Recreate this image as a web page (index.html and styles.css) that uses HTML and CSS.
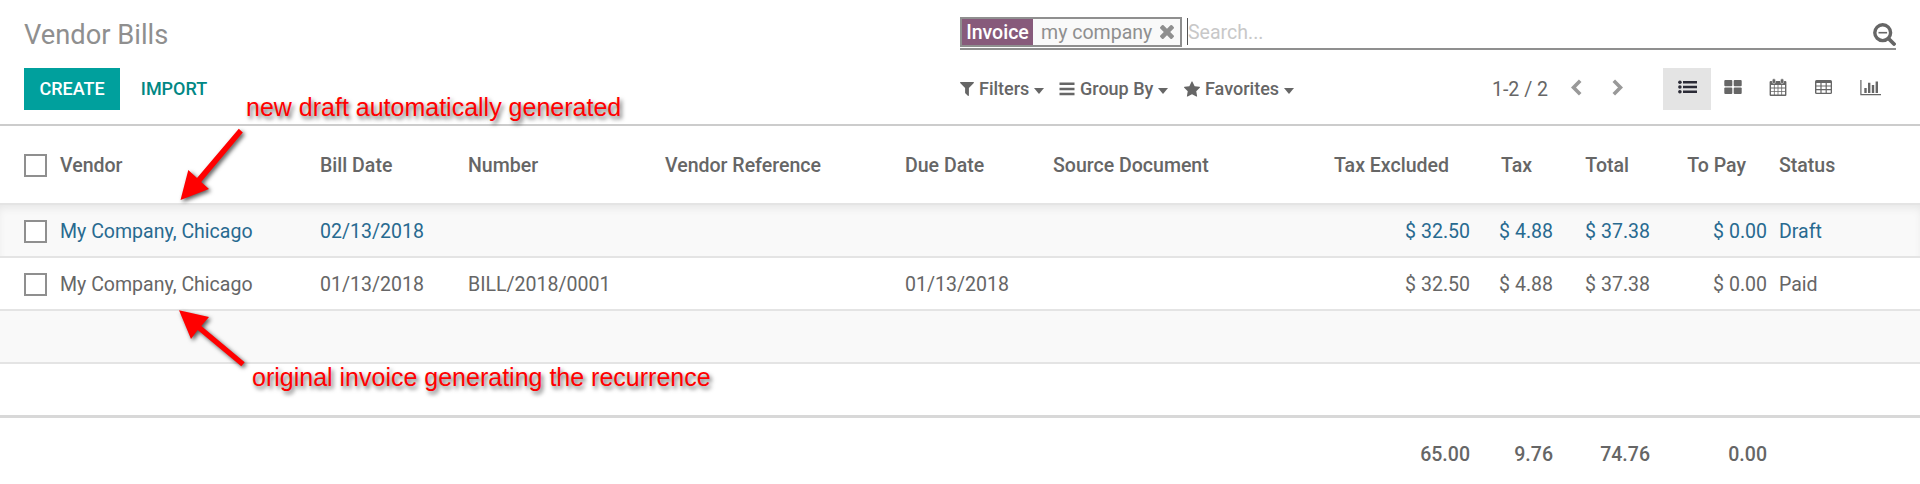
FILE: index.html
```html
<!DOCTYPE html>
<html lang="en">
<head>
<meta charset="utf-8">
<title>Vendor Bills</title>
<link rel="stylesheet" href="styles.css">
</head>
<body>
<header class="control-panel">
  <div class="panel-left">
    <h1 class="title">Vendor Bills</h1>
    <div class="buttons">
      <button class="btn btn-primary">CREATE</button>
      <button class="btn btn-link">IMPORT</button>
    </div>
  </div>
  <div class="panel-right">
    <div class="search">
      <div class="facet">
        <span class="facet-label">Invoice</span>
        <span class="facet-value">my company</span>
        <svg class="facet-remove" viewBox="302 238 1188 1188"><path d="M1490 1194q0 40-28 68l-136 136q-28 28-68 28t-68-28l-294-294-294 294q-28 28-68 28t-68-28l-136-136q-28-28-28-68t28-68l294-294-294-294q-28-28-28-68t28-68l136-136q28-28 68-28t68 28l294 294 294-294q28-28 68-28t68 28l136 136q28 28 28 68t-28 68l-294 294 294 294q28 28 28 68z"/></svg>
      </div>
      <div class="search-input">Search...</div>
      <svg class="search-toggle" viewBox="0 0 23 23"><circle cx="9.7" cy="9.7" r="7.9" fill="none" stroke="#666" stroke-width="3.4"/><path d="M16 16l5 5" stroke="#666" stroke-width="3.8" stroke-linecap="round"/><path d="M5.5 9.7h8.6" stroke="#666" stroke-width="1.6"/></svg>
    </div>
    <div class="tools">
      <div class="menus">
        <div class="menu menu-filter">
          <svg width="14" height="14" viewBox="192 256 1408 1408"><path d="M1595 295q17 41-14 70l-493 493v742q0 42-39 59-13 5-25 5-27 0-45-19l-256-256q-19-19-19-45v-486l-493-493q-31-29-14-70 17-39 59-39h1280q42 0 59 39z"/></svg>
          <span>Filters</span><i class="caret"></i>
        </div>
        <div class="menu menu-group">
          <svg width="16" height="14" viewBox="0 0 16 14"><path d="M.5 .5h15v2.6H.5zM.5 5.7h15v2.6H.5zM.5 10.7h15v2.6H.5z"/></svg>
          <span>Group By</span><i class="caret"></i>
        </div>
        <div class="menu menu-star">
          <svg width="16" height="16" viewBox="64 33 1664 1587"><path d="M1728 647q0 22-26 48l-363 354 86 500q1 7 1 20 0 21-10.5 35.5t-30.5 14.5q-19 0-40-12l-449-236-449 236q-22 12-40 12-21 0-31.5-14.5t-10.5-35.5q0-6 2-20l86-500-364-354q-25-27-25-48 0-37 56-46l502-73 225-455q19-41 49-41t49 41l225 455 502 73q56 9 56 46z"/></svg>
          <span>Favorites</span><i class="caret"></i>
        </div>
      </div>
      <div class="pager">
        <span class="pager-text">1-2 / 2</span>
        <svg class="pager-arrow" viewBox="0 0 11 17"><path d="M9.2 1.8L2.5 8.5l6.7 6.7"/></svg>
        <svg class="pager-arrow" viewBox="0 0 11 17"><path d="M1.8 1.8l6.7 6.7-6.7 6.7"/></svg>
      </div>
      <div class="views">
        <div class="view view-active"><svg width="19" height="14" viewBox="0 0 19 14"><path d="M5 .9h14v2.6H5zM5 5.7h14v2.6H5zM5 10.5h14v2.6H5z"/><circle cx="1.9" cy="2.2" r="1.8"/><circle cx="1.9" cy="7" r="1.8"/><circle cx="1.9" cy="11.8" r="1.8"/></svg></div>
        <div class="view"><svg width="18" height="14" viewBox="0 0 18 14"><rect x=".3" width="8" height="6.3" rx="1"/><rect x="9.7" width="8" height="6.3" rx="1"/><rect x=".3" y="7.6" width="8" height="6.3" rx="1"/><rect x="9.7" y="7.6" width="8" height="6.3" rx="1"/></svg></div>
        <div class="view"><svg class="icon-calendar" width="18" height="19" viewBox="0 0 18 19"><path d="M1.6 3h14.8q1 0 1 1v13q0 1-1 1H1.6q-1 0-1-1V4q0-1 1-1z"/><path fill="#fff" d="M2 7h2.9v2.6H2zM5.7 7h2.9v2.6H5.7zM9.4 7h2.9v2.6H9.4zM13.1 7H16v2.6h-2.9zM2 10.4h2.9V13H2zM5.7 10.4h2.9V13H5.7zM9.4 10.4h2.9V13H9.4zM13.1 10.4H16V13h-2.9zM2 13.8h2.9v2.8H2zM5.7 13.8h2.9v2.8H5.7zM9.4 13.8h2.9v2.8H9.4zM13.1 13.8H16v2.8h-2.9z"/><rect x="3.3" y=".8" width="3.2" height="4.7" rx="1.4" stroke="#fff" stroke-width=".5"/><rect x="11.5" y=".8" width="3.2" height="4.7" rx="1.4" stroke="#fff" stroke-width=".5"/></svg></div>
        <div class="view"><svg width="17" height="14" viewBox="0 0 17 14"><rect width="17" height="14" rx="1.5"/><path fill="#fff" d="M1.4 3h4v2.5h-4zM6.6 3h4v2.5h-4zM11.8 3h3.9v2.5h-3.9zM1.4 6.6h4v2.5h-4zM6.6 6.6h4v2.5h-4zM11.8 6.6h3.9v2.5h-3.9zM1.4 10.2h4v2.5h-4zM6.6 10.2h4v2.5h-4zM11.8 10.2h3.9v2.5h-3.9z"/></svg></div>
        <div class="view view-graph"><svg width="21" height="16" viewBox="0 0 21 16"><path d="M.3 0h1.2v14H21v1.3H.3zM4.3 8h2.4v5H4.3zM8 2.8h2.4V13H8zM11.8 5h2.4v8h-2.4zM15.6 1.6H18V13h-2.4z"/></svg></div>
      </div>
    </div>
  </div>
</header>

<table class="list">
  <colgroup>
    <col class="c-check"><col class="c-vendor"><col class="c-date"><col class="c-number"><col class="c-ref"><col class="c-due"><col class="c-source"><col class="c-untaxed"><col class="c-tax"><col class="c-total"><col class="c-pay"><col class="c-status">
  </colgroup>
  <thead>
    <tr><th class="check"><span class="box"></span></th><th>Vendor</th><th>Bill Date</th><th>Number</th><th>Vendor Reference</th><th>Due Date</th><th>Source Document</th><th class="num">Tax Excluded</th><th class="num">Tax</th><th class="num">Total</th><th class="num">To Pay</th><th>Status</th></tr>
  </thead>
  <tbody>
    <tr class="draft"><td class="check"><span class="box"></span></td><td>My Company, Chicago</td><td>02/13/2018</td><td></td><td></td><td></td><td></td><td class="num">$ 32.50</td><td class="num">$ 4.88</td><td class="num">$ 37.38</td><td class="num">$ 0.00</td><td>Draft</td></tr>
    <tr><td class="check"><span class="box"></span></td><td>My Company, Chicago</td><td>01/13/2018</td><td>BILL/2018/0001</td><td></td><td>01/13/2018</td><td></td><td class="num">$ 32.50</td><td class="num">$ 4.88</td><td class="num">$ 37.38</td><td class="num">$ 0.00</td><td>Paid</td></tr>
    <tr><td colspan="12"></td></tr>
    <tr><td colspan="12"></td></tr>
  </tbody>
  <tfoot>
    <tr><td colspan="7"></td><td class="num">65.00</td><td class="num">9.76</td><td class="num">74.76</td><td class="num">0.00</td><td></td></tr>
  </tfoot>
</table>

<svg class="arrows" width="300" height="400" viewBox="0 0 300 400">
  <g fill="#f00">
    <path d="M180.500 200L188.300 170l8.700 8L238.800 128.800l4 3.600L201.200 182l7.800 7z"/>
    <path d="M179 310.300l30 6.700-7.700 9 43.400 36.200-3.400 4-43.600-36.200-6.700 9z"/>
  </g>
</svg>
<div class="note note-new">new draft automatically generated</div>
<div class="note note-original">original invoice generating the recurrence</div>
</body>
</html>
```
FILE: styles.css
```css
* { box-sizing: border-box; }

body {
  margin: 0;
  position: relative;
  height: 484px;
  overflow: hidden;
  background: #fff;
  color: #666;
  font-family: Roboto, "Liberation Sans", sans-serif;
  font-size: 19.55px;
}

svg { display: block; flex: none; fill: #666; }

.control-panel {
  display: flex;
  height: 126px;
  border-bottom: 2px solid #ccc;
}
.panel-left { width: 960px; padding: 17px 0 0 24px; }
.title {
  margin: 0;
  height: 51px;
  font-size: 27.3px;
  font-weight: 400;
  line-height: 36px;
  color: #8f8f8f;
}
.buttons { display: flex; }
.btn {
  height: 42px;
  padding: 0;
  border: 0;
  font: 500 18px/42px Roboto, sans-serif;
  text-align: center;
}
.btn-primary { width: 96px; background: #00a09d; color: #fff; }
.btn-link { width: 108px; background: none; color: #008784; }

.panel-right { width: 936px; padding-top: 17px; }
.search {
  display: flex;
  align-items: flex-start;
  height: 33px;
  border-bottom: 2px solid #8f8f8f;
}
.facet {
  display: flex;
  align-items: center;
  width: 222px;
  height: 30px;
  border: 2px solid #8f8f8f;
  background: #f9f9f9;
  line-height: 26px;
}
.facet-label {
  width: 71px;
  height: 26px;
  padding-top: 1px;
  background: #875a7b;
  color: #fff;
  font-weight: 500;
  text-align: center;
}
.facet-value { width: 120px; height: 26px; padding: 1px 0 0 8px; color: #8f8f8f; white-space: nowrap; }
.facet-remove { width: 14px; height: 14px; margin-left: 7px; fill: #8f8f8f; }
.search-input {
  flex: 1;
  height: 27px;
  margin: 1px 0 0 5px;
  border-left: 1px solid #555;
  line-height: 30px;
  color: #c8c8c8;
}
.search-toggle { width: 23px; height: 23px; margin-top: 6px; }

.tools { display: flex; height: 42px; margin-top: 18px; align-items: center; }
.menus { display: flex; width: 532px; }
.menu {
  display: flex;
  align-items: center;
  font-size: 18px;
  font-weight: 500;
  line-height: 42px;
  white-space: nowrap;
}
.menu-filter { width: 99px; }
.menu-group { width: 125px; }
.menu span { margin: 0 5px 0 5px; }
.caret {
  margin-top: 3px;
  border: 5.500px solid transparent;
  border-width: 6px 5.5px 0;
  border-top-color: #666;
}
.pager { display: flex; align-items: center; width: 171px; }
.pager-text { width: 79px; white-space: nowrap; }
.pager-arrow {
  width: 11px;
  height: 17px;
  margin: -4px 30px 0 0;
  fill: none;
  stroke: #999;
  stroke-width: 3.6;
}
.views { display: flex; }
.view { display: flex; align-items: center; justify-content: center; width: 45px; height: 42px; padding: 0 1px 4px 0; }
.view-active { width: 48px; padding-right: 0; background: #e4e4e4; }
.view-active svg { fill: #2b2b36; }
.view-graph { padding: 0 0 3px 3px; }
.icon-calendar { margin-top: 1px; }

.list { width: 1920px; table-layout: fixed; border-collapse: separate; border-spacing: 0; }
.c-check { width: 54px; }
.c-vendor { width: 260px; }
.c-date, .c-due { width: 148px; }
.c-number { width: 197px; }
.c-ref { width: 240px; }
.c-source { width: 253px; }
.c-untaxed { width: 176px; }
.c-tax { width: 83px; }
.c-total { width: 97px; }
.c-pay { width: 117px; }
.c-status { width: 147px; }
.list th, .list td { padding: 2px 6px 0; text-align: left; white-space: nowrap; }
.list th { height: 79px; border-bottom: 2px solid #e4e4e4; font-weight: 500; }
.list td { height: 53px; border-bottom: 2px solid #e4e4e4; }
.list .num { text-align: right; }
.list th.num { padding-right: 27px; }
.list .check { padding-left: 24px; }
.box { display: block; width: 23px; height: 23px; border: 2px solid #8f8f8f; background: #fff; }
.list tbody tr:nth-child(odd) { background: #f9f9f9; }
.list tbody tr:first-child { box-shadow: inset 0 5px 8px -2px rgba(0, 0, 0, .08); }
.list tbody tr:last-child td { height: 54px; border-bottom: 3px solid #d8d8d8; }
.list tfoot td { height: 73px; padding-top: 0; border: 0; font-weight: 500; }
.draft { color: #286a90; }

/* annotations floating over the list */
.arrows { position: absolute; left: 0; top: 0; filter: drop-shadow(2px 2px 2px rgba(0, 0, 0, .65)); }
.note {
  position: absolute;
  color: #f00;
  font: 25px/28px "Liberation Sans", sans-serif;
  text-shadow: 2px 3px 4px rgba(0, 0, 0, .6);
  white-space: nowrap;
}
.note-new { left: 246px; top: 93px; }
.note-original { left: 252px; top: 363px; }
```
